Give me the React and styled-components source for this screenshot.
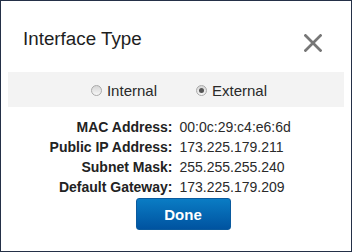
import React from "react";
import styled, { createGlobalStyle } from "styled-components";

const GlobalStyle = createGlobalStyle`
  html, body {
    margin: 0;
    padding: 0;
    background: #fff;
  }
  body {
    font-family: "Liberation Sans", Arial, sans-serif;
  }
`;

const rows = [
  { label: "MAC Address:", value: "00:0c:29:c4:e6:6d" },
  { label: "Public IP Address:", value: "173.225.179.211" },
  { label: "Subnet Mask:", value: "255.255.255.240" },
  { label: "Default Gateway:", value: "173.225.179.209" },
];

const App = () => {
  return (
    <>
      <GlobalStyle />
      <Dialog>
        <Header>
          <Title>Interface Type</Title>
          <CloseButton aria-label="Close">
            <svg width="18" height="18" viewBox="0 0 18 18">
              <path d="M1.5 1.5 L16.5 16.5 M16.5 1.5 L1.5 16.5" stroke="#777" strokeWidth="2.7" strokeLinecap="square" />
            </svg>
          </CloseButton>
        </Header>
        <Band>
          <RadioOption>
            <RadioDot />
            Internal
          </RadioOption>
          <RadioOption>
            <RadioDot checked />
            External
          </RadioOption>
        </Band>
        <InfoGrid>
          {rows.map((r) => (
            <React.Fragment key={r.label}>
              <Label>{r.label}</Label>
              <Value>{r.value}</Value>
            </React.Fragment>
          ))}
        </InfoGrid>
        <Footer>
          <DoneButton>Done</DoneButton>
        </Footer>
      </Dialog>
    </>
  );
};

const Dialog = styled.div`
  width: 352px;
  height: 252px;
  box-sizing: border-box;
  border: 1px solid #243047;
  background: #fff;
  display: flex;
  flex-direction: column;
`;

const Header = styled.div`
  height: 71px;
  box-sizing: border-box;
  padding: 27px 29px 0 22px;
  display: flex;
  justify-content: space-between;
  align-items: flex-start;
`;

const Title = styled.h2`
  margin: 0;
  font-size: 18.8px;
  line-height: 21px;
  font-weight: normal;
  color: #1e1e1e;
`;

const CloseButton = styled.button`
  margin-top: 6px;
  width: 18px;
  height: 18px;
  padding: 0;
  border: none;
  background: none;
  display: flex;
  cursor: pointer;

  svg {
    display: block;
  }
`;

const Band = styled.div`
  margin: 0 7px;
  height: 35px;
  background: #f3f3f3;
  display: flex;
  align-items: center;
  justify-content: center;
  gap: 39px;
  padding-left: 6px;
  padding-top: 1px;
  box-sizing: border-box;
`;

const RadioOption = styled.label`
  display: flex;
  align-items: center;
  gap: 5px;
  font-size: 15px;
  color: #2a2a2a;
  cursor: pointer;
`;

const RadioDot = styled.span`
  width: 11px;
  height: 11px;
  box-sizing: border-box;
  border-radius: 50%;
  border: 1px solid #aaa;
  background: linear-gradient(#d6d6d6, #f6f6f6);
  display: flex;
  align-items: center;
  justify-content: center;

  &::after {
    content: "";
    width: 5px;
    height: 5px;
    border-radius: 50%;
    background: ${(p) => (p.checked ? "#555" : "transparent")};
  }
`;

const InfoGrid = styled.div`
  margin-top: 10px;
  display: grid;
  grid-template-columns: 1fr 1fr;
  column-gap: 7px;
  font-size: 14px;
  line-height: 20px;
`;

const Label = styled.div`
  text-align: right;
  font-weight: bold;
  color: #222;
`;

const Value = styled.div`
  color: #2a2a2a;
`;

const Footer = styled.div`
  margin-top: 1px;
  display: flex;
  justify-content: center;
  padding-left: 14px;
`;

const DoneButton = styled.button`
  width: 95px;
  height: 32px;
  border: 1px solid #0a5a9e;
  border-radius: 3px;
  background: linear-gradient(#0a7cc4, #0053a0);
  color: #fff;
  font-family: "Liberation Sans", Arial, sans-serif;
  font-weight: bold;
  font-size: 15px;
  cursor: pointer;
`;

export default App;
